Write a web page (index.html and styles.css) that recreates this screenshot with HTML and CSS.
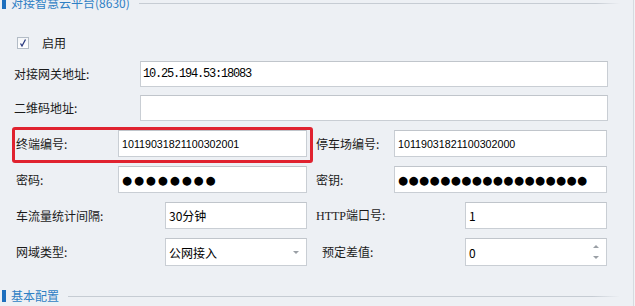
FILE: index.html
```html
<!DOCTYPE html>
<html lang="zh-CN">
<head>
  <meta charset="UTF-8" />
  <title>对接智慧云平台</title>
  <link rel="stylesheet" href="styles.css">
</head>
<body>
  <div class="panel">
    <div class="legend">
      <span class="legend-bar"></span>
      <span class="legend-text">对接智慧云平台(8630)</span>
      <span class="legend-line"></span>
    </div>

    <div class="check-row">
      <span class="check">
        <svg width="12" height="12" viewBox="0 0 12 12">
          <path d="M3.5 6.5 L5 9 L8.5 2.5" fill="none" stroke="#2b3b80" stroke-width="1.3"/>
        </svg>
      </span>
      <span class="check-label">启用</span>
    </div>

    <div class="row wide first">
      <span class="lbl">对接网关地址:</span>
      <span class="field mono">10.25.194.53:18083</span>
    </div>
    <div class="row wide">
      <span class="lbl">二维码地址:</span>
      <span class="field"></span>
    </div>

    <div class="row pair highlight-row">
      <div class="half left marked">
        <span class="lbl lbl-a">终端编号:</span>
        <span class="field num fa">10119031821100302001</span>
      </div>
      <div class="half right">
        <span class="lbl lbl-c">停车场编号:</span>
        <span class="field num fc">10119031821100302000</span>
      </div>
    </div>

    <div class="row pair r4">
      <div class="half left">
        <span class="lbl lbl-a">密码:</span>
        <span class="field fa"><span class="dots">●●●●●●●●</span></span>
      </div>
      <div class="half right">
        <span class="lbl lbl-c">密钥:</span>
        <span class="field fc"><span class="dots tight">●●●●●●●●●●●●●●●●●●</span></span>
      </div>
    </div>

    <div class="row pair r5">
      <div class="half left">
        <span class="lbl lbl-b">车流量统计间隔:</span>
        <span class="field fb">30分钟</span>
      </div>
      <div class="half right">
        <span class="lbl lbl-d"><span class="latin">HTTP</span>端口号:</span>
        <span class="field fb">1</span>
      </div>
    </div>

    <div class="row pair r6">
      <div class="half left">
        <span class="lbl lbl-b">网域类型:</span>
        <span class="field fb select">公网接入<span class="arrow-down"></span></span>
      </div>
      <div class="half right">
        <span class="lbl lbl-d indent">预定差值:</span>
        <span class="field fb spin">0
          <span class="spinner">
            <span class="arrow-up"></span>
            <span class="arrow-down"></span>
          </span>
        </span>
      </div>
    </div>

    <div class="legend bottom">
      <span class="legend-bar"></span>
      <span class="legend-text">基本配置</span>
      <span class="legend-line"></span>
    </div>
  </div>
</body>
</html>
```

FILE: styles.css
```css
* {
  box-sizing: border-box;
}

body {
  margin: 0;
  background: #f1f3f5;
  font-family: "Noto Sans CJK SC", "Noto Sans", sans-serif;
  font-size: 12px;
  color: #1a1a1a;
  overflow: hidden;
}

.panel {
  width: 634px;
  height: 320px;
  margin-top: -4px;
  background: #edf0f4;
  border-right: 1px solid #d6dbe0;
}

/* section headers */
.legend {
  display: flex;
  align-items: center;
  height: 14px;
  padding-left: 2px;
  padding-right: 13px;
}

.legend-bar {
  width: 4px;
  height: 12px;
  background: #1d6fbe;
}

.legend-text {
  margin-left: 5px;
  color: #2f7fc4;
  font-size: 12px;
  line-height: 14px;
}

.legend-line {
  flex: 1;
  height: 1px;
  margin-left: 9px;
  background: linear-gradient(to right, #c6ccd3 95%, rgba(198, 204, 211, 0));
}

.legend.bottom {
  margin-top: 23px;
}

/* enable checkbox */
.check-row {
  display: flex;
  align-items: center;
  height: 12px;
  margin-top: 27px;
  padding-left: 17px;
}

.check {
  width: 12px;
  height: 12px;
  border: 1px solid #b3bcc6;
  background: linear-gradient(#f4f6f8, #ffffff);
  display: flex;
}

.check svg {
  margin: -1px;
}

.check-label {
  margin-left: 13px;
  line-height: 12px;
}

/* form rows */
.row {
  display: flex;
  align-items: center;
}

.row.wide {
  height: 26px;
  margin-top: 8px;
  padding-left: 14px;
}

.row.wide.first {
  margin-top: 12px;
}

.row.wide .lbl {
  width: 126px;
}

.row.wide .field {
  width: 468px;
  height: 26px;
  padding-left: 2px;
}

.lbl {
  flex: none;
  white-space: nowrap;
  line-height: 16px;
}

.field {
  display: flex;
  align-items: center;
  flex: none;
  background: #ffffff;
  border: 1px solid #c9ced4;
  border-top-color: #c0c5cb;
  height: 27px;
  padding-left: 3px;
  color: #000;
  white-space: nowrap;
  overflow: hidden;
}

.pair {
  align-items: flex-start;
  padding-left: 12px;
}

.half {
  display: flex;
  align-items: center;
}

.half.left {
  width: 301px;
  padding-left: 4px;
  padding-right: 6px;
}

.half.right {
  width: 297px;
  padding-left: 3px;
}

.highlight-row {
  margin-top: 6px;
}

.highlight-row .half.right {
  padding-top: 3px;
}

.half.marked {
  border: 3px solid #e0222f;
  border-radius: 3px;
  padding-left: 1px;
  padding-right: 3px;
  padding-bottom: 3px;
}

.r4 {
  margin-top: 3px;
}

.r5 {
  margin-top: 9px;
}

.r6 {
  margin-top: 9px;
}

.r6 .field {
  height: 28px;
}

.lbl-a {
  width: 102px;
}

.lbl-b {
  width: 149px;
}

.lbl-c {
  width: 78px;
}

.lbl-d {
  width: 149px;
}

.lbl.indent {
  padding-left: 6px;
}

.fa {
  width: 189px;
}

.fb {
  width: 142px;
}

.fc {
  width: 213px;
}

.mono {
  font-family: "Liberation Mono", monospace;
  font-size: 12px;
  letter-spacing: -1.2px;
}

.num {
  font-family: "Liberation Sans", sans-serif;
  font-size: 10.7px;
}

.latin {
  font-family: "Liberation Serif", serif;
}

.dots {
  font-family: "DejaVu Sans", sans-serif;
  font-size: 11.5px;
  line-height: 14px;
  letter-spacing: 1.9px;
  color: #000;
}

.dots.tight {
  letter-spacing: 0.5px;
}

/* dropdown and spinner arrows */
.select,
.spin {
  padding-right: 7px;
}

.arrow-down,
.arrow-up {
  width: 0;
  height: 0;
  border-left: 3px solid transparent;
  border-right: 3px solid transparent;
}

.arrow-down {
  border-top: 3px solid #9a9fa5;
}

.arrow-up {
  border-bottom: 3px solid #9a9fa5;
}

.select .arrow-down {
  margin-left: auto;
}

.spinner {
  margin-left: auto;
  display: flex;
  flex-direction: column;
  justify-content: space-between;
  height: 14px;
}
```
